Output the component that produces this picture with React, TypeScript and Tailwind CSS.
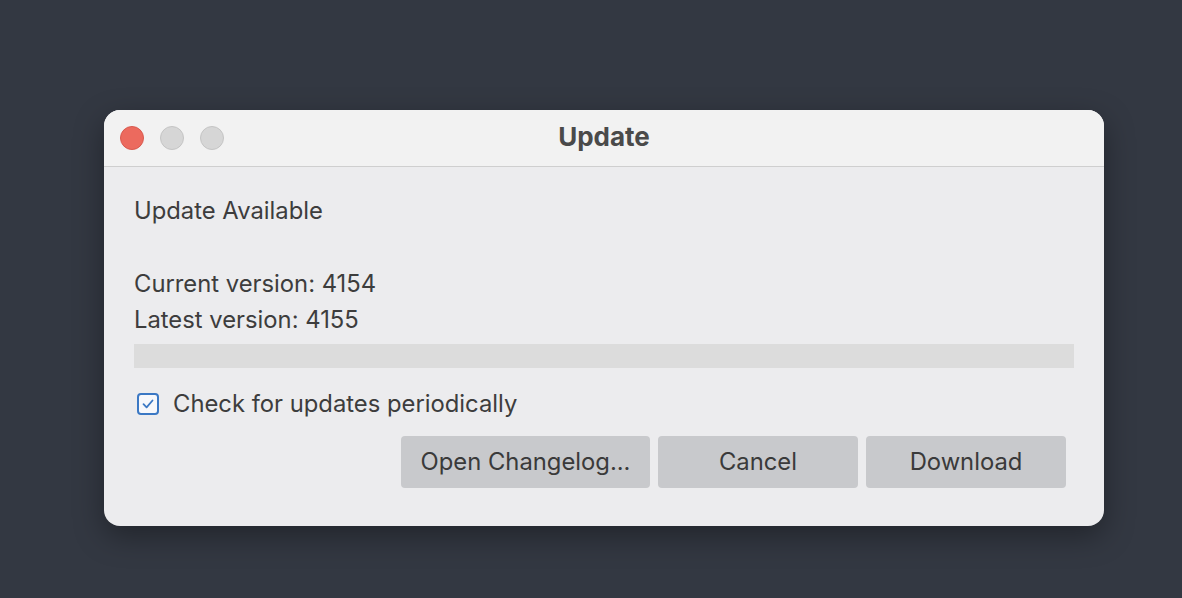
export default function App() {
  return (
    <div className="w-[1182px] h-[598px] bg-[#333842] flex items-start justify-start pl-[104px] pt-[110px]" style={{ fontFamily: 'Inter, "Noto Sans", sans-serif' }}>
      <div className="w-[1000px] h-[416px] rounded-[16px] overflow-hidden bg-[#ececee] flex flex-col shadow-[0_10px_30px_rgba(0,0,0,0.35)]">
        <div className="h-[57px] bg-[#f2f2f2] border-b border-[#cfcfcf] relative flex items-center justify-center">
          <div className="absolute left-[16px] top-[16px] flex gap-[16px]">
            <div className="w-[24px] h-[24px] rounded-full bg-[#ec6a5e] border border-[#d85a4f]" />
            <div className="w-[24px] h-[24px] rounded-full bg-[#d6d6d6] border border-[#c4c4c4]" />
            <div className="w-[24px] h-[24px] rounded-full bg-[#d6d6d6] border border-[#c4c4c4]" />
          </div>
          <span className="text-[26px] font-bold text-[#4a4a4a] -mt-[3px]">Update</span>
        </div>
        <div className="flex-1 flex flex-col px-[30px] text-[#3d3d3d] text-[23.8px]">
          <div className="mt-[30px] leading-[28px]">Update Available</div>
          <div className="mt-[41px] leading-[36px]">Current version: 4154</div>
          <div className="leading-[36px]">Latest version: 4155</div>
          <div className="mt-[6px] h-[24px] bg-[#dcdcdc]" />
          <div className="mt-[22px] flex items-center gap-[14px] pl-[3px]">
            <div className="w-[22px] h-[22px] rounded-[4px] border-2 border-[#3b78c4] bg-[#f7f8fb] flex items-center justify-center">
              <svg width="14" height="14" viewBox="0 0 14 14" fill="none">
                <path d="M2.5 7.2 L5.6 10.3 L11.5 3.5" stroke="#3b78c4" strokeWidth="1.8" strokeLinecap="round" strokeLinejoin="round" />
              </svg>
            </div>
            <span className="leading-[28px]">Check for updates periodically</span>
          </div>
          <div className="mt-[18px] flex justify-end gap-[8px] pr-[8px]">
            <button className="w-[249px] h-[52px] rounded-[4px] bg-[#c8c9cc] text-[23.8px] text-[#3a3a3a]">Open Changelog...</button>
            <button className="w-[200px] h-[52px] rounded-[4px] bg-[#c8c9cc] text-[23.8px] text-[#3a3a3a]">Cancel</button>
            <button className="w-[200px] h-[52px] rounded-[4px] bg-[#c8c9cc] text-[23.8px] text-[#3a3a3a]">Download</button>
          </div>
        </div>
      </div>
    </div>
  );
}
